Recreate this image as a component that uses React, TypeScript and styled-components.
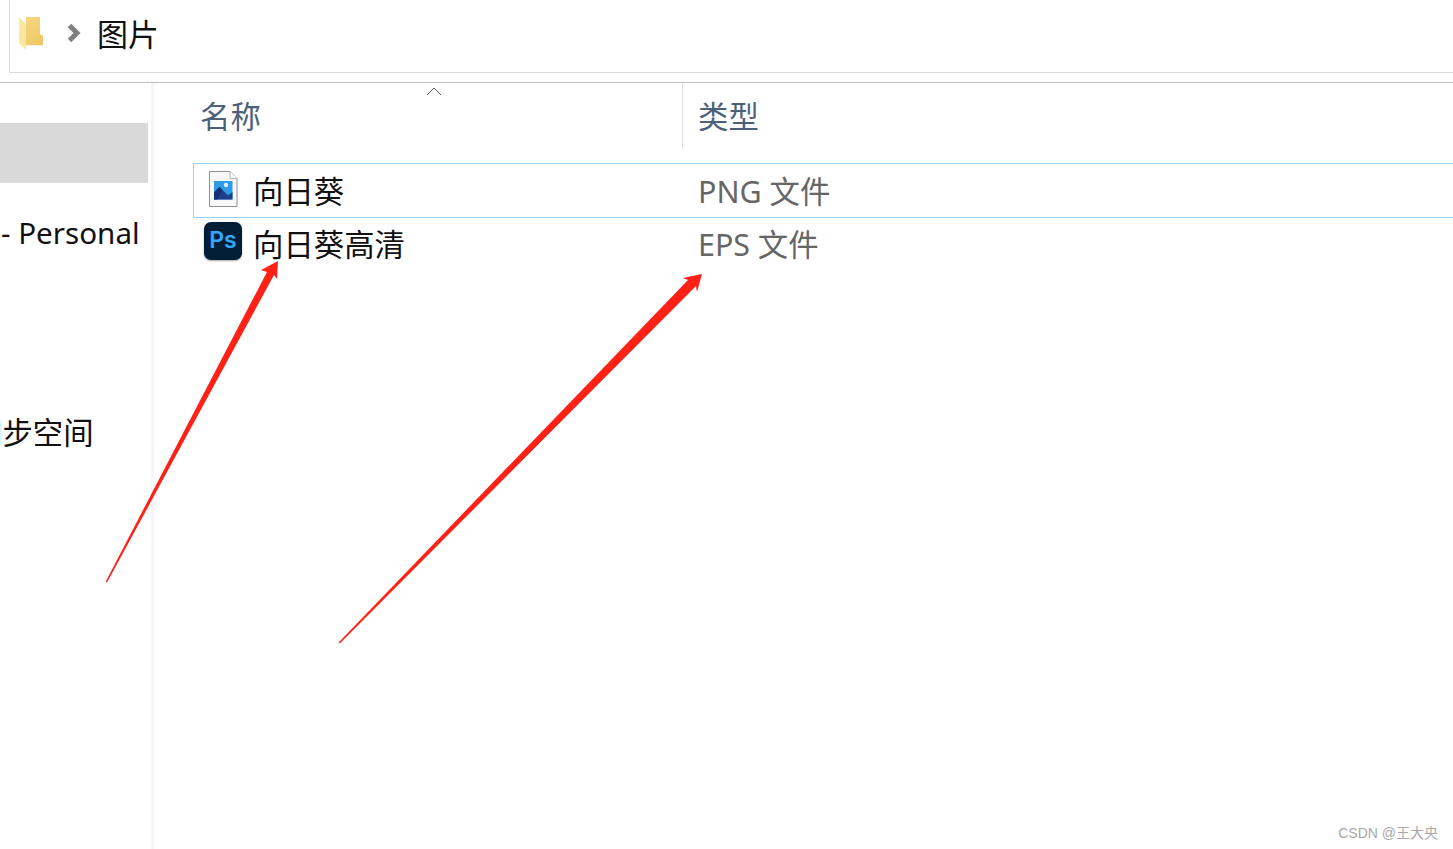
import React, { FC } from "react";
import styled, { createGlobalStyle } from "styled-components";

const files = [
  { name: "向日葵", type: "PNG 文件", icon: "image", selected: true },
  { name: "向日葵高清", type: "EPS 文件", icon: "ps", selected: false },
];

const FolderIcon: FC = () => (
  <svg width="26" height="36" viewBox="0 0 26 36">
    <defs>
      <linearGradient id="folderBack" x1="0" y1="0" x2="1" y2="1">
        <stop offset="0" stopColor="#f7d983" />
        <stop offset="1" stopColor="#eec662" />
      </linearGradient>
    </defs>
    <path d="M1 1H22V18L25 20V29H8V1Z" fill="url(#folderBack)" />
    <path d="M1 1L8 8V34.5L1 27V1Z" fill="#fde6a0" />
    <path d="M8 29H25V30H8Z" fill="#fbf3d8" />
  </svg>
);

const ChevronIcon: FC = () => (
  <svg width="14" height="20" viewBox="0 0 14 20">
    <path d="M2.5 2.5L10 10L2.5 17.5" fill="none" stroke="#808080" strokeWidth="5" />
  </svg>
);

const ImageFileIcon: FC = () => (
  <svg width="30" height="38" viewBox="0 0 30 38">
    <path d="M1.5 1.5H22L29 8.5V36.5H1.5Z" fill="#f8f8f8" stroke="#8f8f8f" />
    <path d="M22 1.5V8.5H29" fill="#fff" stroke="#b5b5b5" />
    <rect x="6" y="11" width="18.5" height="18.5" fill="#2f9ae8" />
    <circle cx="18" cy="15" r="2.2" fill="#d9f0ff" />
    <path d="M6 29.5V22.5L11.5 17L20 25.5L24.5 22V29.5Z" fill="#1e3f8c" />
    <path d="M6 22.5L11.5 17L14.5 20L9 29.5H6Z" fill="#163272" />
  </svg>
);

const SortCaret: FC = () => (
  <svg width="16" height="10" viewBox="0 0 16 10">
    <path d="M1 9L8 2L15 9" fill="none" stroke="#5a5a5a" />
  </svg>
);

const App: FC = () => (
  <Page>
    <GlobalStyle />
    <AddressBar>
      <FolderIcon />
      <Separator>
        <ChevronIcon />
      </Separator>
      <Crumb>图片</Crumb>
    </AddressBar>
    <Explorer>
      <Sidebar>
        <NavItem $active />
        <NavItem $indent={-138} $size={29.6}>
          OneDrive - Personal
        </NavItem>
        <NavItem $indent={-28} $gap={140} $size={30.4}>
          同步空间
        </NavItem>
      </Sidebar>
      <Content>
        <ColumnHeader>
          <NameHeading>
            名称
            <CaretSlot>
              <SortCaret />
            </CaretSlot>
          </NameHeading>
          <TypeHeading>类型</TypeHeading>
        </ColumnHeader>
        <FileList>
          {files.map((file) => (
            <FileRow key={file.name} $selected={file.selected}>
              <NameCell>
                <IconSlot $raised={file.icon === "ps"}>
                  {file.icon === "ps" ? <PsBadge>Ps</PsBadge> : <ImageFileIcon />}
                </IconSlot>
                <FileName>{file.name}</FileName>
              </NameCell>
              <TypeCell>{file.type}</TypeCell>
            </FileRow>
          ))}
        </FileList>
      </Content>
    </Explorer>
    <Annotations width="1453" height="849" viewBox="0 0 1453 849">
      <path d="M105.8 581.5L267 272L261 270L278 261L277 279L274 275L107 582.5Z" fill="#ff2116" />
      <path d="M338.6 642.4L688 280L683 278L702 274L697 292L696 286L339.8 643.6Z" fill="#ff2116" />
    </Annotations>
    <Watermark>CSDN @王大央</Watermark>
  </Page>
);

export default App;

const GlobalStyle = createGlobalStyle`
  html, body {
    margin: 0;
    padding: 0;
    background: #fff;
  }
  body {
    font-family: "Noto Sans", "Noto Sans CJK SC", sans-serif;
  }
`;
const Page = styled.div`
  position: relative;
  display: flex;
  flex-direction: column;
  width: 1453px;
  height: 849px;
  overflow: hidden;
  background: #fff;
`;
const AddressBar = styled.div`
  display: flex;
  align-items: center;
  box-sizing: border-box;
  height: 73px;
  margin-left: 9px;
  padding: 0 0 5px 8px;
  border-left: 1px solid #dcdcdc;
  border-bottom: 1px solid #dcdcdc;
`;
const Separator = styled.span`
  display: flex;
  margin: -2px 0 0 23px;
`;
const Crumb = styled.span`
  margin-left: 16px;
  font-size: 31px;
  line-height: 40px;
  color: #111;
`;
const Explorer = styled.div`
  display: flex;
  flex: 1;
  min-height: 0;
  margin-top: 9px;
  border-top: 1px solid #bfbfbf;
`;
const Sidebar = styled.nav`
  flex: none;
  box-sizing: content-box;
  width: 151px;
  padding-top: 40px;
  overflow: hidden;
  border-right: 3px solid #f5f5f5;
`;
const NavItem = styled.div<{
  $active?: boolean;
  $indent?: number;
  $gap?: number;
  $size?: number;
}>`
  width: 148px;
  height: 60px;
  margin-top: ${({ $gap }) => $gap ?? 20}px;
  text-indent: ${({ $indent }) => $indent ?? 0}px;
  font-size: ${({ $size }) => $size ?? 30}px;
  line-height: 60px;
  white-space: nowrap;
  color: #111;
  background: ${({ $active }) => ($active ? "#d9d9d9" : "transparent")};

  &:first-child {
    margin-top: 0;
  }
`;
const Content = styled.main`
  flex: 1;
  min-width: 0;
`;
const ColumnHeader = styled.div`
  display: flex;
  height: 65px;
  font-size: 30.4px;
  line-height: 68px;
  color: #4c607a;
`;
const NameHeading = styled.div`
  position: relative;
  box-sizing: border-box;
  width: 529px;
  padding-left: 46px;
  border-right: 1px solid #e0e0e0;
`;
const CaretSlot = styled.span`
  position: absolute;
  top: 3px;
  left: 272px;
  display: flex;
`;
const TypeHeading = styled.div`
  padding-left: 15px;
`;
const FileList = styled.div`
  margin: 15px 0 0 39px;
`;
const FileRow = styled.div<{ $selected?: boolean }>`
  display: flex;
  align-items: center;
  box-sizing: border-box;
  height: 55px;
  margin-top: -2px;
  padding-top: 2px;
  border: 1px solid ${({ $selected }) => ($selected ? "#99d1ff" : "transparent")};
  border-right: 0;
  font-size: 30.4px;

  &:first-child {
    margin-top: 0;
  }
`;
const NameCell = styled.div`
  display: flex;
  align-items: center;
  box-sizing: border-box;
  width: 504px;
  padding-left: 10px;
`;
const IconSlot = styled.span<{ $raised?: boolean }>`
  display: flex;
  flex: none;
  justify-content: center;
  width: 38px;
  margin-top: ${({ $raised }) => ($raised ? -7 : -6)}px;
`;
const PsBadge = styled.span`
  display: block;
  width: 38px;
  height: 38px;
  border-radius: 7px;
  font-family: Inter, sans-serif;
  font-size: 23px;
  font-weight: 600;
  line-height: 36px;
  text-align: center;
  color: #31a8ff;
  background: #001e36;
  box-shadow: 0 1px 2px rgba(0, 0, 0, 0.35);
`;
const FileName = styled.span`
  margin-left: 11px;
  line-height: 40px;
  color: #111;
`;
const TypeCell = styled.span`
  line-height: 40px;
  color: #666;
`;
const Annotations = styled.svg`
  position: absolute;
  top: 0;
  left: 0;
  pointer-events: none;
`;
const Watermark = styled.span`
  position: absolute;
  right: 15px;
  bottom: 7px;
  font-family: "Liberation Sans", "Noto Sans CJK SC", sans-serif;
  font-size: 14px;
  color: #a8a8a8;
`;
